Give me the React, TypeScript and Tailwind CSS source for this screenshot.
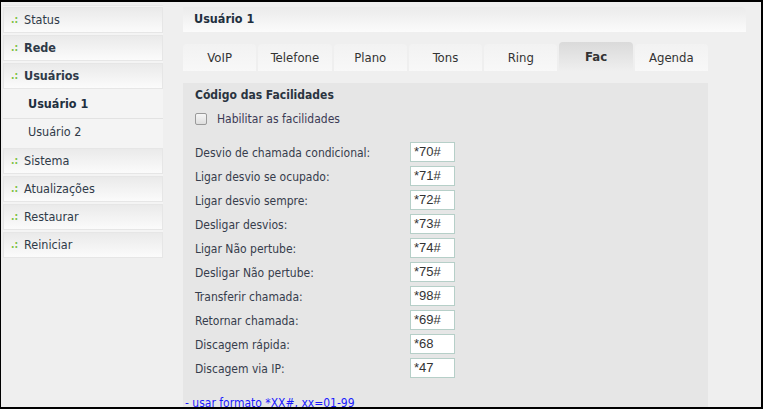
import React from "react";

const FONT = "font-['DejaVu_Sans_Condensed','DejaVu_Sans',sans-serif]";

const navTop = [
  { label: "Status", bold: false },
  { label: "Rede", bold: true },
  { label: "Usuários", bold: true },
];
const navBottom = ["Sistema", "Atualizações", "Restaurar", "Reiniciar"];
const tabs = ["VoIP", "Telefone", "Plano", "Tons", "Ring", "Fac", "Agenda"];
const rows: [string, string][] = [
  ["Desvio de chamada condicional:", "*70#"],
  ["Ligar desvio se ocupado:", "*71#"],
  ["Ligar desvio sempre:", "*72#"],
  ["Desligar desvios:", "*73#"],
  ["Ligar Não pertube:", "*74#"],
  ["Desligar Não pertube:", "*75#"],
  ["Transferir chamada:", "*98#"],
  ["Retornar chamada:", "*69#"],
  ["Discagem rápida:", "*68"],
  ["Discagem via IP:", "*47"],
];

function NavBox({ label, bold }: { label: string; bold?: boolean }) {
  return (
    <div className="h-[26px] shrink-0 flex items-center border border-[#e6e6e6] bg-gradient-to-b from-[#eaeaea] to-[#fbfbfb] pl-[7px]">
      <span className="text-[10px] font-bold text-[#7cc242] w-[13px] leading-none">.:</span>
      <span className={`text-[12.5px] text-[#2f3a48] ${bold ? "font-bold" : ""}`}>{label}</span>
    </div>
  );
}

export default function App() {
  return (
    <div className={`relative w-[763px] h-[409px] overflow-hidden bg-[#efefef] border-t-2 border-l border-r-2 border-b-2 border-black ${FONT}`}>
      <div className="flex h-full pl-[2px] pt-[3px] pr-[2px]">
        {/* Sidebar */}
        <div className="w-[160px] shrink-0">
          <div className="bg-[#f4f4f4] border-t border-[#e9e9e9] pt-[1px] flex flex-col gap-[2px]">
            {navTop.map((n) => (
              <NavBox key={n.label} label={n.label} bold={n.bold} />
            ))}
            <div className="flex flex-col">
              <div className="h-[28px] flex items-center pl-[25px] border-b border-[#e2e2e2] text-[12.5px] font-bold text-[#1f2f3f]">
                Usuário 1
              </div>
              <div className="h-[27px] flex items-center pl-[25px] text-[12.5px] text-[#2f3a48]">Usuário 2</div>
            </div>
            {navBottom.map((n) => (
              <NavBox key={n} label={n} />
            ))}
          </div>
        </div>

        {/* Main */}
        <div className="ml-[20px] flex-1 flex flex-col pt-[2px] min-h-0">
          <div className="shrink-0 w-[563px] h-[25px] rounded-tr-[5px] bg-gradient-to-b from-[#ebebeb] to-[#fbfbfb] flex items-center pl-[11px] text-[12.5px] font-bold text-[#1f2f3f]">
            Usuário 1
          </div>
          <div className="shrink-0 w-[525px] flex gap-[2px] mt-[10px] items-end h-[29px]">
            {tabs.map((t) =>
              t === "Fac" ? (
                <div
                  key={t}
                  className="flex-1 h-[29px] rounded-t-[4px] bg-gradient-to-b from-[#dadada] to-[#efefef] flex items-center justify-center pt-[1px] text-[13px] font-bold text-[#333]"
                >
                  {t}
                </div>
              ) : (
                <div
                  key={t}
                  className="flex-1 h-[27px] rounded-t-[4px] bg-gradient-to-b from-[#f2f2f2] to-[#f8f8f8] flex items-center justify-center text-[13px] text-[#333]"
                >
                  {t}
                </div>
              )
            )}
          </div>
          <div className="shrink-0 w-[525px] mt-[12px] bg-[#e6e6e6] pl-[12px] pt-[2px] pb-[20px]">
            <div className="text-[12px] font-bold text-[#2a3440] h-[20px] flex items-center">Código das Facilidades</div>
            <div className="flex items-center h-[14px] mt-[7px]">
              <span className="w-[12px] h-[12px] rounded-[2px] border border-[#9a9a9a] bg-gradient-to-b from-[#f6f6f6] to-[#dedede]" />
              <span className="ml-[10px] text-[12px] text-[#3b3a55]">Habilitar as facilidades</span>
            </div>
            <div className="flex flex-col gap-[4px] mt-[16px]">
              {rows.map(([l, v]) => (
                <div key={l} className="flex items-center h-[20px]">
                  <span className="w-[215px] text-[12px] text-[#363d4c] pt-[2px]">{l}</span>
                  <span className="w-[45px] h-[20px] border border-[#b6cfc8] bg-white pl-[3px] font-['Liberation_Sans',sans-serif] text-[13px] text-[#333] leading-[17px]">
                    {v}
                  </span>
                </div>
              ))}
            </div>
            <div className="-ml-[10px] mt-[16px] text-[12px] text-[#1a1aff]">
              - usar formato *XX#, xx=01-99
            </div>
          </div>
        </div>
      </div>
    </div>
  );
}
